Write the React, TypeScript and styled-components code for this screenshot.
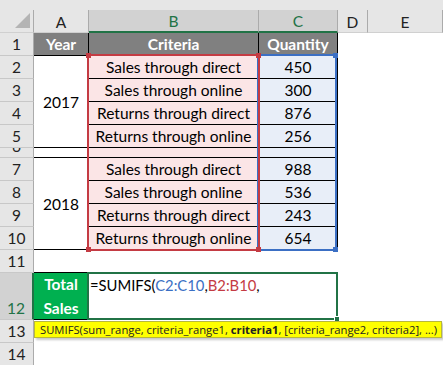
import React from "react";
import styled, { createGlobalStyle, css } from "styled-components";

const GlobalStyle = createGlobalStyle`
  html, body { margin: 0; padding: 0; background: #ffffff; }
  body { font-family: Lato, "Noto Sans", sans-serif; }
  * { box-sizing: border-box; }
`;

type Place = { $r: string; $c: string };
const place = css<Place>`
  grid-row: ${(p) => p.$r};
  grid-column: ${(p) => p.$c};
`;

const GREEN = "#217346";
const RED = "#c43b43";
const BLUE = "#3b6fc4";

const Sheet = styled.div`
  display: grid;
  grid-template-columns: 34px 55px 170px 79px 30px 75px;
  grid-template-rows: 10px 23px repeat(5, 23px) 10px repeat(4, 23px) 23px 47px 23px 23px;
  width: 443px;
  height: 365px;
  overflow: hidden;
  background: #ffffff;
  font-family: Lato, "Noto Sans", sans-serif;
  font-size: 15.5px;
  color: #000;
`;

const TopBand = styled.div`
  grid-row: 1;
  grid-column: 1 / -1;
  background: #e6e6e6;
`;

const Corner = styled.div`
  grid-row: 2;
  grid-column: 1;
  background: #e6e6e6;
  border-right: 1px solid #ababab;
  border-bottom: 1px solid #d0d0d0;
  display: flex;
  justify-content: flex-end;
  align-items: flex-end;
  padding: 0 3px 4px 0;
`;

const ColHead = styled.div<Place & { $selected?: boolean }>`
  ${place};
  display: flex;
  align-items: center;
  justify-content: center;
  padding-top: 1px;
  background: ${(p) => (p.$selected ? "#d2d2d2" : "#e6e6e6")};
  color: ${(p) => (p.$selected ? GREEN : "#222")};
  border-right: 1px solid #ababab;
  border-bottom: ${(p) => (p.$selected ? `2px solid ${GREEN}` : "1px solid #d0d0d0")};
`;

const RowHead = styled.div<Place & { $selected?: boolean }>`
  ${place};
  display: flex;
  align-items: flex-end;
  justify-content: center;
  overflow: hidden;
  line-height: 18px;
  padding-bottom: 2px;
  background: ${(p) => (p.$selected ? "#d2d2d2" : "#e6e6e6")};
  color: ${(p) => (p.$selected ? GREEN : "#222")};
  border-right: ${(p) => (p.$selected ? `2px solid ${GREEN}` : "1px solid #ababab")};
  border-bottom: 1px solid #c8c8c8;
`;

const baseCell = css`
  display: flex;
  align-items: center;
  justify-content: center;
  white-space: nowrap;
  border-right: 1px solid #000;
  border-bottom: 1px solid #000;
`;

const HeadCell = styled.div<Place>`
  ${place};
  ${baseCell};
  background: #808080;
  color: #ffffff;
  font-weight: 700;
`;

const YearCell = styled.div<Place>`
  ${place};
  ${baseCell};
  background: #ffffff;
`;

const CriteriaCell = styled.div<Place>`
  ${place};
  ${baseCell};
  background: #fbe5e6;
`;

const QtyCell = styled.div<Place>`
  ${place};
  ${baseCell};
  background: #e8eef8;
`;

const TotalCell = styled.div<Place>`
  ${place};
  border-right: 1px solid #000;
  border-bottom: 1px solid #000;
  box-shadow: 0 -1px 0 #000;
  background: #00b050;
  color: #ffffff;
  font-weight: 700;
  display: flex;
  flex-direction: column;
  align-items: center;
  justify-content: center;
  line-height: 24px;
`;

const FormulaCell = styled.div<Place>`
  ${place};
  background: #ffffff;
  font-size: 14.8px;
  line-height: 24px;
  padding-left: 1px;
  white-space: nowrap;
`;

const Ref = styled.span<{ $color: string }>`
  color: ${(p) => p.$color};
`;

const RangeBox = styled.div<Place & { $color: string; $m: string; $z: number }>`
  ${place};
  margin: ${(p) => p.$m};
  border: 2px solid ${(p) => p.$color};
  position: relative;
  pointer-events: none;
  z-index: ${(p) => p.$z};
`;

const Knob = styled.span<{ $color: string; $v: "top" | "bottom"; $h: "left" | "right" }>`
  position: absolute;
  ${(p) => p.$v}: -3px;
  ${(p) => p.$h}: -3px;
  width: 5px;
  height: 5px;
  background: ${(p) => p.$color};
`;

const Selection = styled.div<Place>`
  ${place};
  margin: -1px 0 0 -2px;
  border: 2px solid ${GREEN};
  position: relative;
  pointer-events: none;
  z-index: 3;
`;

const FillHandle = styled.span`
  position: absolute;
  right: -4px;
  bottom: -4px;
  width: 6px;
  height: 6px;
  background: ${GREEN};
  border: 1px solid #ffffff;
`;

const Tooltip = styled.div<Place>`
  ${place};
  align-self: start;
  margin: 1px 1px 0 0;
  height: 17px;
  background: #ffff00;
  border: 1px solid #b8b83a;
  box-shadow: 2px 2px 2px rgba(0, 0, 0, 0.22);
  font-family: "Open Sans", "Noto Sans", sans-serif;
  font-size: 11.25px;
  line-height: 15px;
  color: #222;
  padding-left: 5px;
  white-space: nowrap;
  z-index: 4;
`;

const Strong = styled.b`
  font-weight: 700;
`;

const criteria = [
  "Sales through direct",
  "Sales through online",
  "Returns through direct",
  "Returns through online",
];

const blocks = [
  { year: "2017", start: 2, qty: [450, 300, 876, 256] },
  { year: "2018", start: 7, qty: [988, 536, 243, 654] },
];

const columns = [
  { label: "A", selected: false },
  { label: "B", selected: true },
  { label: "C", selected: true },
  { label: "D", selected: false },
  { label: "E", selected: false },
];

const knobs: Array<["top" | "bottom", "left" | "right"]> = [
  ["top", "left"],
  ["top", "right"],
  ["bottom", "left"],
  ["bottom", "right"],
];

const gr = (excelRow: number) => `${excelRow + 2}`;

export default function App() {
  return (
    <>
      <GlobalStyle />
      <Sheet>
        <TopBand />
        <Corner>
          <svg width="15" height="15" viewBox="0 0 15 15">
            <polygon points="15,0 15,15 0,15" fill="#b4b4b4" />
          </svg>
        </Corner>
        {columns.map((c, i) => (
          <ColHead key={c.label} $r="2" $c={`${i + 2}`} $selected={c.selected}>
            {c.label}
          </ColHead>
        ))}
        {Array.from({ length: 14 }, (_, i) => i + 1).map((n) => (
          <RowHead key={n} $r={gr(n)} $c="1" $selected={n === 12}>
            {n}
          </RowHead>
        ))}

        <HeadCell $r={gr(1)} $c="2">Year</HeadCell>
        <HeadCell $r={gr(1)} $c="3">Criteria</HeadCell>
        <HeadCell $r={gr(1)} $c="4">Quantity</HeadCell>

        {blocks.map((b) => (
          <React.Fragment key={b.year}>
            <YearCell $r={`${b.start + 2} / span 4`} $c="2">
              {b.year}
            </YearCell>
            {b.qty.map((q, i) => (
              <React.Fragment key={i}>
                <CriteriaCell $r={gr(b.start + i)} $c="3">
                  {criteria[i]}
                </CriteriaCell>
                <QtyCell $r={gr(b.start + i)} $c="4">
                  {q}
                </QtyCell>
              </React.Fragment>
            ))}
          </React.Fragment>
        ))}
        <YearCell $r={gr(6)} $c="2" />
        <CriteriaCell $r={gr(6)} $c="3" />
        <QtyCell $r={gr(6)} $c="4" />

        <TotalCell $r={gr(12)} $c="2">
          <span>Total</span>
          <span>Sales</span>
        </TotalCell>
        <FormulaCell $r={gr(12)} $c="3 / span 2">
          =SUMIFS(<Ref $color={BLUE}>C2:C10</Ref>,<Ref $color={RED}>B2:B10</Ref>,
        </FormulaCell>

        <RangeBox $r={`${gr(2)} / span 9`} $c="4" $color={BLUE} $m="-2px 1px -1px -2px" $z={2}>
          {knobs.map(([v, h]) => (
            <Knob key={v + h} $color={BLUE} $v={v} $h={h} />
          ))}
        </RangeBox>
        <RangeBox $r={`${gr(2)} / span 9`} $c="3" $color={RED} $m="-2px -1px -1px -2px" $z={3}>
          {knobs.map(([v, h]) => (
            <Knob key={v + h} $color={RED} $v={v} $h={h} />
          ))}
        </RangeBox>

        <Selection $r={gr(12)} $c="3 / span 2">
          <FillHandle />
        </Selection>

        <Tooltip $r={gr(13)} $c="2 / -1">
          SUMIFS(sum_range, criteria_range1, <Strong>criteria1</Strong>, [criteria_range2, criteria2], ...)
        </Tooltip>
      </Sheet>
    </>
  );
}
